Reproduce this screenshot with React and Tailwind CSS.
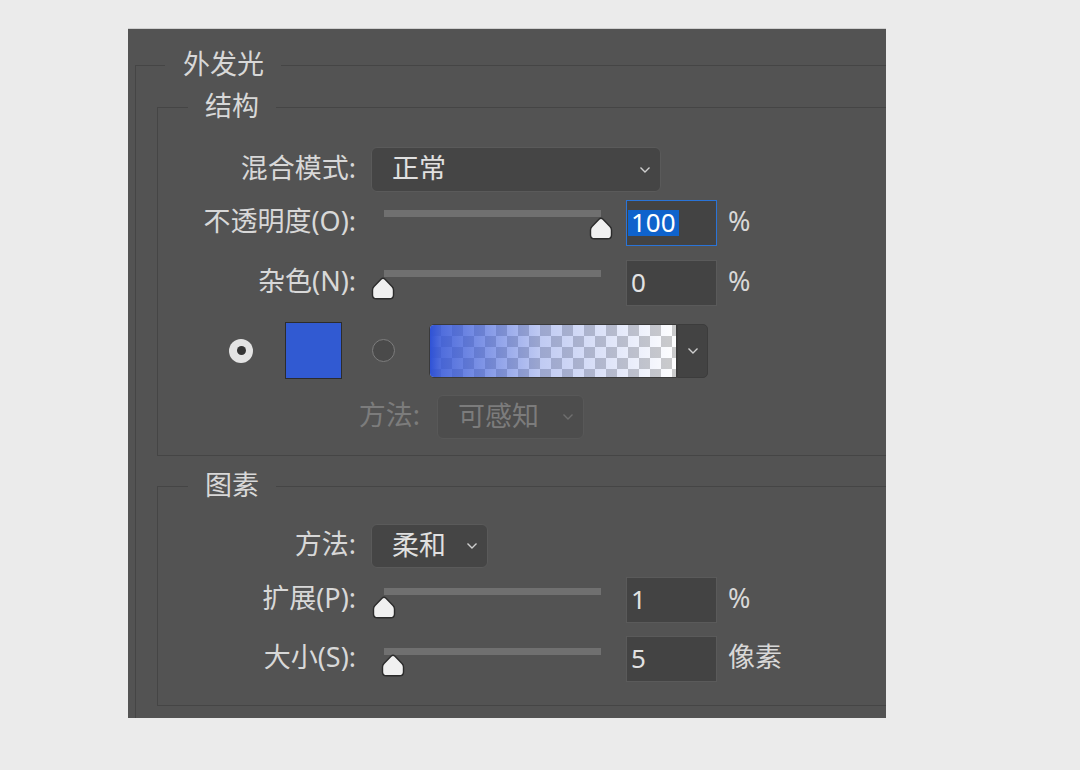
import React from "react";

const line = "border-[#454545]";

const Chevron = ({ color = "#cfcfcf" }) => (
  <svg width="12" height="8" viewBox="0 0 12 8">
    <path d="M1.5 1.5 L6 6 L10.5 1.5" fill="none" stroke={color} strokeWidth="1.4" />
  </svg>
);

// header of a group box: short line, title, long line
const Legend = ({ lead, pad, label }) => (
  <div className="flex h-[30px]">
    <div className={`${lead} self-end h-[15px] border-t border-l ${line}`} />
    <span className={`${pad} pb-[3px] leading-[27px] text-[27px] text-[#d8d8d8]`}>{label}</span>
    <div className={`flex-1 self-end h-[15px] border-t ${line}`} />
  </div>
);

const Label = ({ w = "w-[198px]", dim, children }) => (
  <div
    className={`${w} shrink-0 text-right text-[27px] leading-[30px] pb-[4px] ${
      dim ? "text-[#7c7c7c]" : "text-[#d8d8d8]"
    }`}
  >
    {children}
  </div>
);

const Dropdown = ({ w, h = "h-[45px]", text, dim, gap = "ml-[15px]" }) => (
  <div
    className={`${w} ${h} ${gap} flex items-center justify-between pl-[20px] pr-[9px] rounded-[6px] border ${
      dim ? "bg-[#4d4d4d] border-[#585858]" : "bg-[#454545] border-[#5a5a5a]"
    }`}
  >
    <span className={`text-[27px] leading-[30px] pb-[3px] ${dim ? "text-[#7c7c7c]" : "text-[#e0e0e0]"}`}>
      {text}
    </span>
    <Chevron color={dim ? "#6f6f6f" : "#cfcfcf"} />
  </div>
);

const Thumb = () => (
  <svg width="24" height="23" viewBox="0 0 24 23">
    <path
      d="M12 1.2 Q13 1.2 14 2.2 L21 9.5 Q22.5 11 22.5 13 L22.5 18 Q22.5 21.8 18.5 21.8 L5.5 21.8 Q1.5 21.8 1.5 18 L1.5 13 Q1.5 11 3 9.5 L10 2.2 Q11 1.2 12 1.2 Z"
      fill="#f0f0f0"
      stroke="#2b2b2b"
      strokeWidth="1.4"
    />
  </svg>
);

const Slider = ({ left, track = 10, thumb = 17 }) => (
  <div className="relative w-[243px] h-[46px] ml-[15px] shrink-0">
    <div className="absolute left-[13px] w-[217px] h-[7px] bg-[#707070]" style={{ top: track }} />
    <div className="absolute" style={{ left, top: thumb }}>
      <Thumb />
    </div>
  </div>
);

const NumBox = ({ value, active, unit }) => (
  <>
    <div
      className={`ml-[12px] w-[91px] h-[46px] flex items-center pl-[1px] bg-[#434343] border ${
        active ? "border-[#2a74d8]" : "border-[#5a5a5a]"
      }`}
    >
      <span
        className={`text-[26px] leading-[25px] px-[3px] pb-[1px] ${
          active ? "bg-[#0f63cc] text-white" : "text-[#e2e2e2]"
        }`}
      >
        {value}
      </span>
    </div>
    <span className="ml-[11px] text-[27px] leading-[30px] pb-[4px] text-[#d8d8d8]">{unit}</span>
  </>
);

const SliderRow = ({ label, left, value, unit, active, mt, track, thumb }) => (
  <div className={`flex items-center h-[46px] ${mt}`}>
    <Label>{label}</Label>
    <Slider left={left} track={track} thumb={thumb} />
    <NumBox value={value} active={active} unit={unit} />
  </div>
);

const GradientBar = () => (
  <div className="flex h-[54px]">
    <div className="w-[248px] h-[54px] rounded-l-[5px] overflow-hidden border border-[#3a3a3a]">
      <svg width="248" height="54" className="block">
        <defs>
          <pattern id="chk" width="22" height="22" patternUnits="userSpaceOnUse">
            <rect width="22" height="22" fill="#ffffff" />
            <rect width="11" height="11" fill="#cccccc" />
            <rect x="11" y="11" width="11" height="11" fill="#cccccc" />
          </pattern>
          <linearGradient id="fade" x1="0" x2="1" y1="0" y2="0">
            <stop offset="0" stopColor="#2f52d6" stopOpacity="1" />
            <stop offset="0.04" stopColor="#2f52d6" stopOpacity="0.85" />
            <stop offset="0.45" stopColor="#2f52d6" stopOpacity="0.3" />
            <stop offset="1" stopColor="#2f52d6" stopOpacity="0" />
          </linearGradient>
        </defs>
        <rect width="248" height="54" fill="url(#chk)" />
        <rect width="248" height="54" fill="url(#fade)" />
      </svg>
    </div>
    <div className="w-[31px] h-[54px] flex items-center justify-center bg-[#434343] border border-[#3c3c3c] rounded-r-[5px]">
      <Chevron />
    </div>
  </div>
);

export default function App() {
  return (
    <div className="w-[1080px] h-[770px] bg-[#ebebeb] pt-[28px] font-['Noto_Sans','Noto_Sans_CJK_SC',sans-serif]">
      <div className="ml-[128px] w-[758px] h-[690px] bg-[#535353] border-t border-[#cfcfcf] flex flex-col pt-[21px] pl-[7px]">
        <Legend lead="w-[30px]" pad="pl-[18px] pr-[17px]" label="外发光" />
        <div className={`flex-1 flex flex-col border-l ${line} pl-[21px] pt-[12px]`}>
          {/* 结构 */}
          <Legend lead="w-[31px]" pad="px-[17px]" label="结构" />
          <div className={`flex flex-col border-l border-b ${line} pb-[16px]`}>
            <div className="flex items-center mt-[25px]">
              <Label>混合模式:</Label>
              <Dropdown w="w-[290px]" text="正常" />
            </div>
            <SliderRow label="不透明度(O):" left={218} value="100" unit="%" active mt="mt-[8px]" />
            <SliderRow label="杂色(N):" left={0} value="0" unit="%" mt="mt-[14px]" />
            <div className="flex items-center h-[57px] mt-[16px]">
              <div className="ml-[71px] w-[24px] h-[24px] rounded-full bg-[#e4e4e4] flex items-center justify-center">
                <div className="w-[9px] h-[9px] rounded-full bg-[#353535]" />
              </div>
              <div className="ml-[32px] w-[57px] h-[57px] bg-[#315ad2] border border-[#2c2c2c]" />
              <div className="ml-[30px] w-[23px] h-[23px] rounded-full bg-[#4a4a4a] border-[1.5px] border-[#7d7d7d]" />
              <div className="ml-[34px]">
                <GradientBar />
              </div>
            </div>
            <div className="flex items-center mt-[16px]">
              <Label w="w-[262px]" dim>
                方法:
              </Label>
              <Dropdown w="w-[147px]" h="h-[44px]" text="可感知" dim gap="ml-[17px]" />
            </div>
          </div>

          {/* 图素 */}
          <div className="mt-[15px]">
            <Legend lead="w-[31px]" pad="px-[17px]" label="图素" />
          </div>
          <div className={`flex flex-col border-l border-b ${line} pb-[23px]`}>
            <div className="flex items-center mt-[23px]">
              <Label>方法:</Label>
              <Dropdown w="w-[117px]" h="h-[44px]" text="柔和" />
            </div>
            <SliderRow label="扩展(P):" left={1} value="1" unit="%" mt="mt-[9px]" track={11} thumb={19} />
            <SliderRow label="大小(S):" left={10} value="5" unit="像素" mt="mt-[13px]" track={12} thumb={18} />
          </div>
        </div>
      </div>
    </div>
  );
}
